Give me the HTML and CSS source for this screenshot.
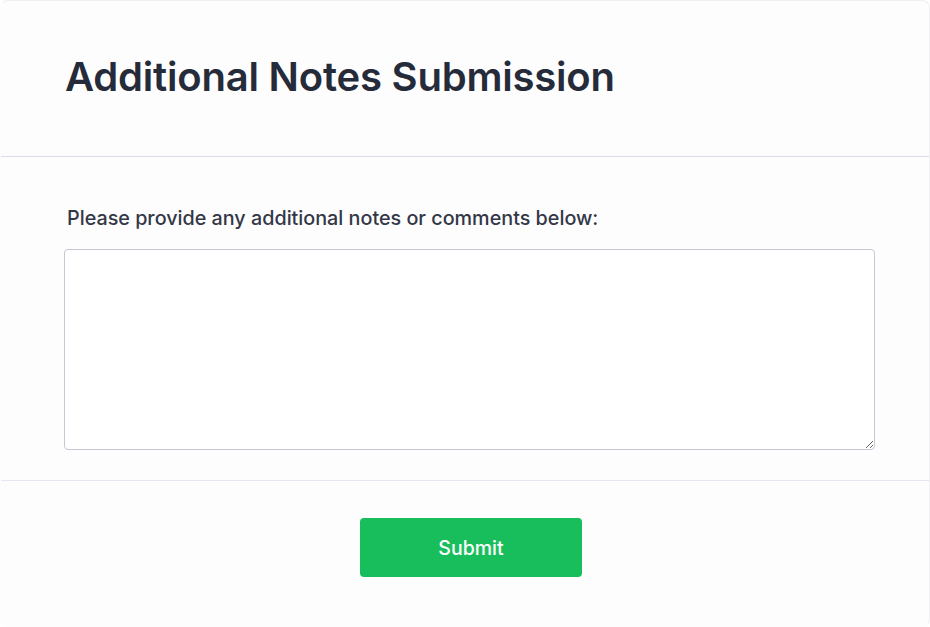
FILE: index.html
```html
<!DOCTYPE html>
<html lang="en">
<head>
<meta charset="utf-8">
<title>Additional Notes Submission</title>
<link rel="stylesheet" href="styles.css">
</head>
<body>
<main class="card">
  <header class="card-header">
    <h1 class="title">Additional Notes Submission</h1>
  </header>
  <section class="card-body">
    <label class="label" for="notes">Please provide any additional notes or comments below:</label>
    <textarea id="notes" class="notes"></textarea>
  </section>
  <footer class="card-footer">
    <button class="submit" type="button">Submit</button>
  </footer>
</main>
</body>
</html>
```
FILE: styles.css
```css
html, body {
  margin: 0;
  padding: 0;
  background: #ffffff;
}
body {
  font-family: Inter, "Noto Sans", sans-serif;
  color: #2a2f3e;
}
.card {
  box-sizing: border-box;
  width: 930px;
  height: 627px;
  background: #fdfdfe;
  border: 1px solid #f0f0f4;
  border-left-color: transparent;
  border-bottom-color: transparent;
  border-radius: 8px;
  display: flex;
  flex-direction: column;
}
.card-header {
  padding: 50px 64px 53px;
  border-bottom: 1px solid #dcdde8;
}
.title {
  margin: 0;
  font-size: 40px;
  line-height: 52px;
  font-weight: 600;
  color: #262b3a;
  letter-spacing: -0.2px;
}
.card-body {
  padding: 49px 54px 30px 63px;
  border-bottom: 1px solid #e6e6f0;
  display: flex;
  flex-direction: column;
  gap: 19px;
}
.label {
  font-size: 19.75px;
  line-height: 24px;
  font-weight: 500;
  color: #333746;
  padding-left: 3px;
}
.notes {
  box-sizing: border-box;
  width: 811px;
  height: 201px;
  border: 1px solid #c6c7d4;
  border-radius: 4px;
  background: #ffffff;
  font-family: inherit;
  font-size: 16px;
  padding: 8px;
}
.card-footer {
  padding: 37px 0 0 12px;
  display: flex;
  justify-content: center;
}
.submit {
  width: 222px;
  height: 59px;
  border: none;
  border-radius: 4px;
  background: #19be5c;
  color: #ffffff;
  font-family: inherit;
  font-size: 19.5px;
  font-weight: 500;
}
```
